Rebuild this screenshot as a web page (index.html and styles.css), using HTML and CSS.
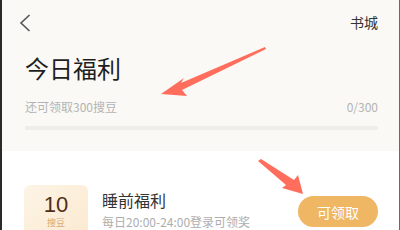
FILE: index.html
```html
<!DOCTYPE html>
<html lang="zh">
<head>
<meta charset="utf-8">
<link rel="stylesheet" href="styles.css">
</head>
<body>
<div class="page">
  <section class="top">
    <div class="nav">
      <svg class="back" width="12" height="18" viewBox="0 0 12 18"><path d="M10.5 1 L2 9 L10.5 17" fill="none" stroke="#555" stroke-width="1.6"/></svg>
      <span class="nav-link">书城</span>
    </div>
    <h1 class="title">今日福利</h1>
    <div class="progress-row">
      <span>还可领取300搜豆</span>
      <span>0/300</span>
    </div>
    <div class="bar"></div>
  </section>
  <section class="list">
    <div class="item">
      <div class="tile">
        <div class="tile-num">10</div>
        <div class="tile-unit">搜豆</div>
      </div>
      <div class="info">
        <div class="info-title">睡前福利</div>
        <div class="info-desc">每日20:00-24:00登录可领奖</div>
      </div>
      <button class="btn">可领取</button>
    </div>
  </section>
  <svg class="arrows" width="400" height="230" viewBox="0 0 400 230">
    <path d="M265 47 L181 83 L184 78 L161 94 L187 96 L182 90 L266 49 Z" fill="#ff6e5c"/>
    <path d="M258 161 L286 185 L282 188 L303 194 L298 175 L294 180 L261 159 Z" fill="#ff6e5c"/>
  </svg>
</div>
</body>
</html>
```
FILE: styles.css
```css
html, body {
  margin: 0;
  padding: 0;
}
body {
  width: 400px;
  height: 230px;
  overflow: hidden;
  font-family: "Noto Sans CJK SC", "Noto Sans", sans-serif;
  background: #fff;
}
.page {
  position: relative;
  width: 400px;
  height: 230px;
  box-sizing: border-box;
  border-left: 2px solid #2a2a2a;
  border-right: 1px solid #6a6a6a;
  overflow: hidden;
}
.top {
  background: #faf9f5;
  height: 151px;
  padding: 0 21px 0 23px;
  box-sizing: border-box;
}
.nav {
  display: flex;
  justify-content: space-between;
  align-items: center;
  height: 44px;
  margin-left: -6px;
}
.back {
  display: block;
  margin-top: 1px;
}
.nav-link {
  font-size: 14px;
  color: #333;
  margin-top: -1px;
}
.title {
  margin: 7px 0 0 0;
  font-size: 24px;
  line-height: 34px;
  font-weight: 400;
  color: #1e1e1e;
}
.progress-row {
  display: flex;
  justify-content: space-between;
  margin-top: 14px;
  font-size: 12px;
  line-height: 16px;
  color: #b4b4b4;
}
.bar {
  margin-top: 11px;
  height: 4px;
  border-radius: 2px;
  background: #eeedea;
}
.list {
  padding: 34px 21px 0 22px;
}
.item {
  display: flex;
  align-items: flex-start;
}
.tile {
  width: 64px;
  height: 56px;
  border-radius: 6px;
  background: linear-gradient(135deg, #fdf4e6, #fbe9cf);
  display: flex;
  flex-direction: column;
  align-items: center;
  box-sizing: border-box;
  padding-top: 7px;
}
.tile-num {
  font-size: 22px;
  line-height: 25px;
  color: #4e2e12;
  font-family: "Liberation Sans", Arial, sans-serif;
}
.tile-unit {
  font-size: 9px;
  line-height: 11px;
  color: #d6a974;
}
.info {
  flex: 1;
  margin-left: 14px;
  padding-top: 4px;
}
.info-title {
  font-size: 16px;
  line-height: 22px;
  color: #333;
}
.info-desc {
  font-size: 12px;
  line-height: 16px;
  color: #aeaeae;
  margin-top: 3px;
}
.btn {
  margin-top: 11px;
  width: 80px;
  height: 31px;
  border: none;
  border-radius: 16px;
  background: #efb664;
  color: #fff;
  font-family: "Noto Sans CJK SC", sans-serif;
  font-size: 14px;
  padding: 0;
}
.arrows {
  position: absolute;
  left: -2px;
  top: 0;
  pointer-events: none;
}
```
